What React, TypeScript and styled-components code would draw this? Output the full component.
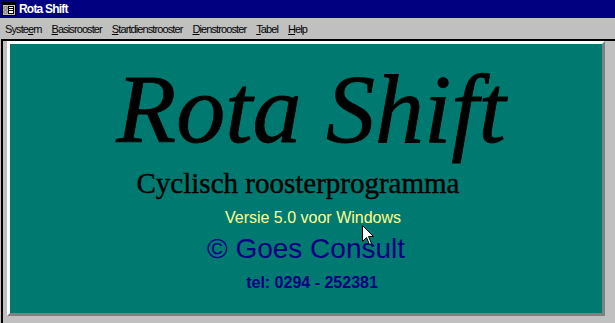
import React from 'react'
import styled, { createGlobalStyle } from 'styled-components'

const GlobalStyle = createGlobalStyle`
  html, body {
    margin: 0;
    padding: 0;
    background: #c0c0c0;
    overflow: hidden;
  }
`

const Window = styled.div`
  width: 615px;
  height: 323px;
  display: flex;
  flex-direction: column;
  background: #c0c0c0;
  font-family: "Liberation Sans", Arial, sans-serif;
`

const TitleBar = styled.div`
  height: 18px;
  background: #000080;
  display: flex;
  align-items: center;
  gap: 3px;
  padding-left: 2px;
`

const TitleText = styled.span`
  color: #fff;
  font-weight: bold;
  font-size: 12px;
  letter-spacing: -0.8px;
  line-height: 18px;
`

const MenuBar = styled.div`
  height: 21px;
  display: flex;
  align-items: center;
  gap: 10px;
  padding-left: 5px;
  padding-top: 1px;
  box-sizing: border-box;
`

const MenuItem = styled.span`
  font-size: 11px;
  letter-spacing: -0.9px;
  color: #000;
  u {
    text-decoration: underline;
    text-underline-offset: 1px;
  }
`

const Client = styled.div`
  flex: 1;
  margin-left: 1px;
  border-top: 2px solid #000;
  border-left: 2px solid #000;
  padding-left: 4px;
`

const Panel = styled.div`
  position: relative;
  width: 598px;
  height: 275px;
  box-sizing: border-box;
  border-top: 3px solid #fff;
  border-left: 3px solid #fff;
  border-bottom: 3px solid #808080;
  border-right: 3px solid #808080;
  background: #007a70;
  display: flex;
  flex-direction: column;
  align-items: center;
  padding-top: 16px;
`

// $shift moves the line's centre sideways, the original was centred by hand
const Line = styled.div<{
  $size: number
  $serif?: boolean
  $italic?: boolean
  $bold?: boolean
  $color: string
  $gap: number
  $shift?: number
  $stroke?: number
}>`
  font-family: ${p => (p.$serif ? '"Liberation Serif", "Times New Roman", serif' : '"Liberation Sans", Arial, sans-serif')};
  font-size: ${p => p.$size}px;
  font-style: ${p => (p.$italic ? 'italic' : 'normal')};
  font-weight: ${p => (p.$bold ? 'bold' : 'normal')};
  color: ${p => p.$color};
  -webkit-text-stroke: ${p => p.$stroke || 0}px ${p => p.$color};
  line-height: 1;
  margin-top: ${p => p.$gap}px;
  margin-left: ${p => 2 * (p.$shift || 0)}px;
  white-space: nowrap;
`

const Cursor = styled.svg`
  position: absolute;
  left: 352px;
  top: 181px;
`

function AppIcon() {
  return (
    <svg width="14" height="14" viewBox="0 0 14 14">
      <rect x="0.5" y="0.5" width="13" height="13" fill="#c0c0c0" stroke="#000" />
      <rect x="1" y="1" width="12" height="2" fill="#000" />
      <rect x="2" y="5" width="3" height="2" fill="#fff" stroke="#000" strokeWidth="0.5" />
      <rect x="2" y="9" width="3" height="2" fill="#fff" stroke="#000" strokeWidth="0.5" />
      <rect x="6.5" y="4.5" width="5" height="7" fill="#fff" stroke="#000" />
      <line x1="7" y1="6.5" x2="11" y2="6.5" stroke="#000" />
      <line x1="7" y1="8.5" x2="11" y2="8.5" stroke="#000" />
    </svg>
  )
}

const menus: [string, number][] = [
  ['Systeem', 5],
  ['Basisrooster', 0],
  ['Startdienstrooster', 0],
  ['Dienstrooster', 0],
  ['Tabel', 0],
  ['Help', 0],
]

export default function App() {
  return (
    <>
      <GlobalStyle />
      <Window>
        <TitleBar>
          <AppIcon />
          <TitleText>Rota Shift</TitleText>
        </TitleBar>
        <MenuBar>
          {menus.map(([label, idx]) => (
            <MenuItem key={label}>
              {label.slice(0, idx)}
              <u>{label[idx]}</u>
              {label.slice(idx + 1)}
            </MenuItem>
          ))}
        </MenuBar>
        <Client>
          <Panel>
            <Line $size={98} $serif $italic $color="#000" $gap={0} $shift={5} $stroke={0.8}>Rota Shift</Line>
            <Line $size={29} $serif $color="#000" $gap={11} $shift={-8} $stroke={0.4}>Cyclisch roosterprogramma</Line>
            <Line $size={16} $color="#ffff90" $gap={12} $shift={7}>Versie 5.0 voor Windows</Line>
            <Line $size={28} $color="#000080" $gap={9}>© Goes Consult</Line>
            <Line $size={16} $bold $color="#000080" $gap={12} $shift={6}>tel: 0294 - 252381</Line>
            <Cursor width="13" height="21" viewBox="0 0 13 21">
              <path d="M0.5 0.5 L0.5 16.5 L4.5 12.5 L7.5 19.5 L9.5 18.5 L6.5 11.5 L11.5 11.5 Z" fill="#fff" stroke="#000" strokeWidth="1" />
            </Cursor>
          </Panel>
        </Client>
      </Window>
    </>
  )
}
